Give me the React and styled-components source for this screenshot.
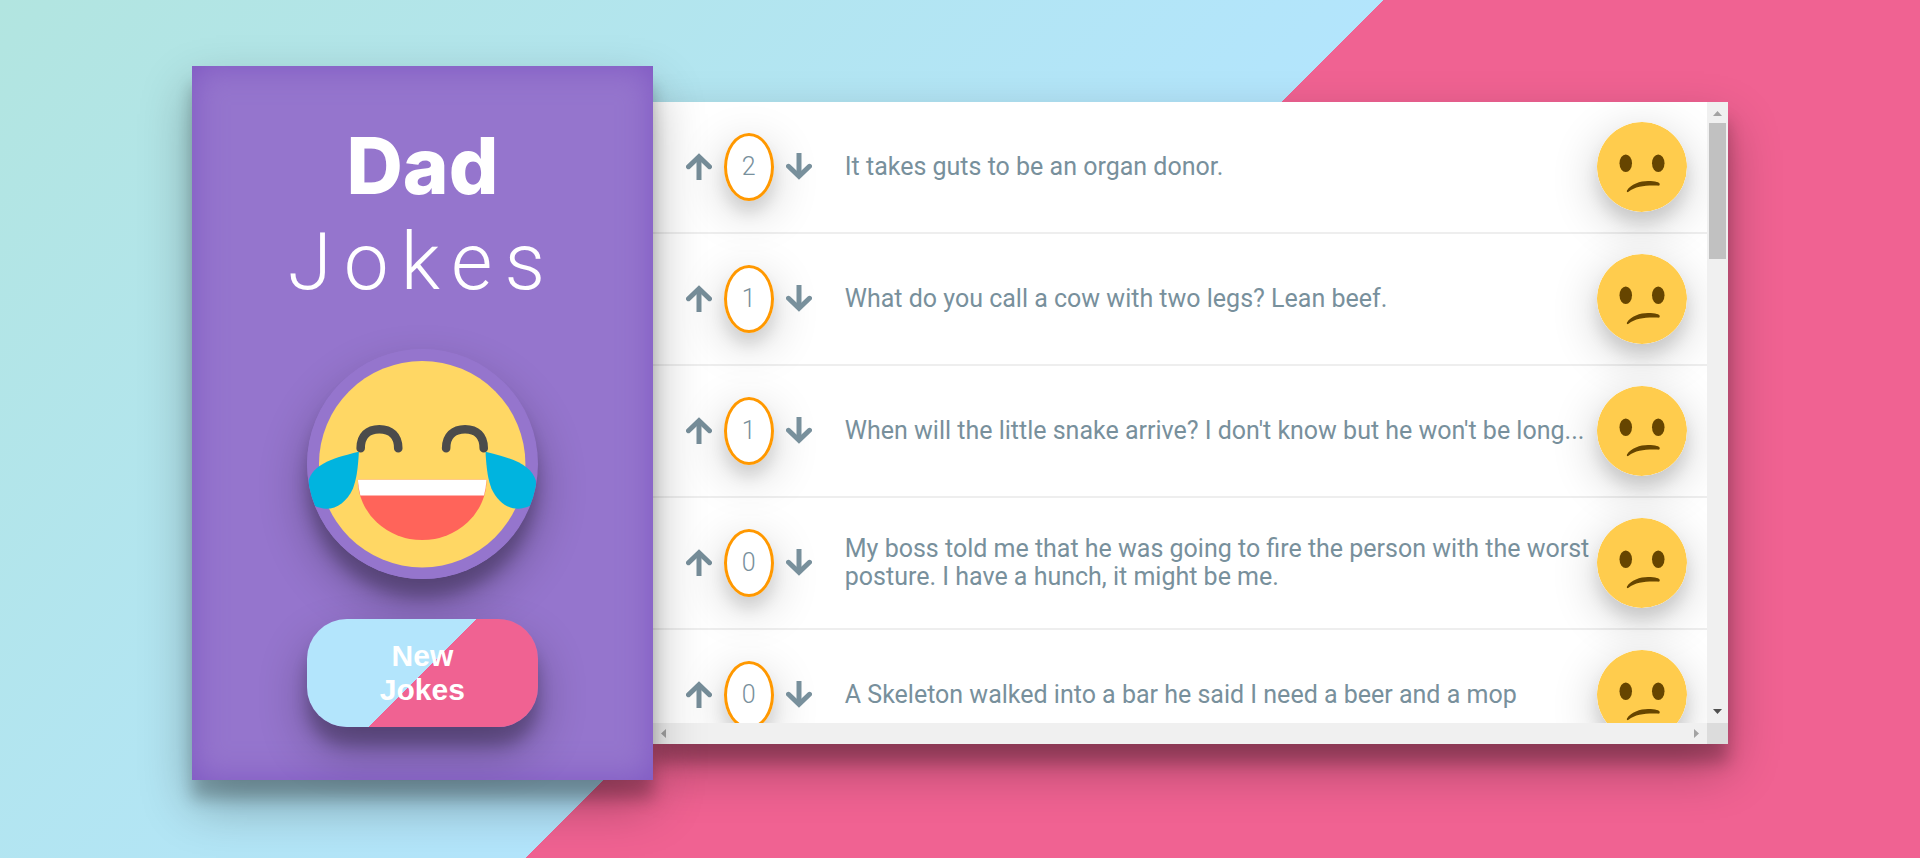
import React from "react";
import styled, { createGlobalStyle } from "styled-components";

const deepShadow = "0 24px 48px rgba(0, 0, 0, 0.3), 0 19px 15px rgba(0, 0, 0, 0.22)";
const softShadow = "0 12px 48px rgba(0, 0, 0, 0.2), 0 12px 15px rgba(0, 0, 0, 0.1)";

const GlobalStyle = createGlobalStyle`
  *, *::before, *::after { box-sizing: border-box; }
  body {
    margin: 0;
    font-family: Roboto, "Liberation Sans", sans-serif;
    background: #f06292;
  }
`;

const Page = styled.main`
  min-height: 100vh;
  padding-bottom: 12px;
  display: flex;
  align-items: center;
  justify-content: center;
  overflow: hidden;
  background: linear-gradient(-45deg, #f06292 calc(50% + 4px), #b3e5fc calc(50% + 4px), #b2e5e0 100%);
`;

const JokeList = styled.div`
  display: flex;
  align-items: center;
  width: 80%;
`;

const Sidebar = styled.aside`
  position: relative;
  z-index: 2;
  display: flex;
  flex-direction: column;
  align-items: center;
  width: 30%;
  padding: 52px 0 53px;
  background: #9575cd;
  box-shadow: ${deepShadow}, inset 0 0 32px #7e57c2;
`;

const Title = styled.h1`
  margin: 0 0 39px;
  color: #fff;
  font-size: 80px;
  line-height: 96px;
  font-weight: 300;
  letter-spacing: 12px;
  text-align: center;
`;

const Strong = styled.span`
  display: block;
  font-family: Inter, Roboto, sans-serif;
  font-size: 78px;
  font-weight: 800;
  letter-spacing: 0;
`;

const Laugh = styled.svg`
  display: block;
  width: 50%;
  border-radius: 50%;
  box-shadow: ${deepShadow};
`;

const MoreButton = styled.button`
  width: 50%;
  margin: 40px 0 0;
  padding: 20px 60px;
  border: 0;
  border-radius: 40px;
  color: #fff;
  font: 700 30px/34px "Liberation Sans", sans-serif;
  background: linear-gradient(-45deg, #f06292 0%, #f06292 50%, #b3e5fc 50%, #b3e5fc 100%);
  box-shadow: ${deepShadow};
  cursor: pointer;
`;

const Panel = styled.section`
  display: grid;
  grid-template-columns: minmax(0, 1fr) 21px;
  grid-template-rows: minmax(0, 1fr) 21px;
  width: 70%;
  height: 642px;
  background: #fff;
  box-shadow: ${deepShadow};
`;

const Jokes = styled.ul`
  margin: 0;
  padding: 0;
  list-style: none;
  overflow: hidden;
`;

const Joke = styled.li`
  display: flex;
  align-items: center;
  height: 132px;
  padding: 0 20px;
  border-bottom: 2px solid #eee;
  color: #78909c;
`;

const Votes = styled.div`
  display: flex;
  align-items: center;
  justify-content: center;
  gap: 10px;
  width: 152px;
`;

const VoteButton = styled.button`
  display: flex;
  justify-content: center;
  width: 30px;
  padding: 0;
  border: 0;
  background: none;
  color: inherit;
  cursor: pointer;
`;

const VoteIcon = styled.svg`
  width: 26px;
  height: 27px;
  fill: none;
  stroke: currentColor;
  stroke-width: 5px;
`;

const Score = styled.span`
  width: 50px;
  height: 68px;
  border: 3px solid #ff9800;
  border-radius: 50%;
  font-size: 25px;
  line-height: 62px;
  font-weight: 300;
  text-align: center;
  box-shadow: ${softShadow};
`;

const JokeText = styled.p`
  flex: 1;
  margin: 0 0 0 20px;
  font-size: 25px;
  line-height: 28px;
`;

const Face = styled.svg`
  flex: none;
  width: 90px;
  height: 90px;
  border-radius: 50%;
  box-shadow: ${softShadow};
`;

const ScrollBar = styled.div`
  display: flex;
  flex-direction: ${(p) => (p.$vertical ? "column" : "row")};
  align-items: center;
  justify-content: space-between;
  background: #f0f0f0;
`;

const ScrollArrow = styled.svg`
  flex: none;
  width: 21px;
  height: 21px;
  fill: ${(p) => (p.$active ? "#505050" : "#a3a3a3")};
`;

const Thumb = styled.div`
  width: 17px;
  height: 136px;
  margin-bottom: auto;
  background: #c1c1c1;
`;

const Corner = styled.div`
  background: #dcdcdc;
`;

const arrowPaths = {
  up: "M6 14h9l-4.500-5z",
  down: "M6 7h9l-4.500 5z",
  left: "M13 6v9l-5-4.500z",
  right: "M8 6v9l5-4.500z",
};

function Arrow({ dir, active }) {
  return (
    <ScrollArrow $active={active} viewBox="0 0 21 21" aria-hidden="true">
      <path d={arrowPaths[dir]} />
    </ScrollArrow>
  );
}

function VoteArrow({ down }) {
  return (
    <VoteIcon viewBox="0 0 26 27" aria-hidden="true">
      <g transform={down ? "rotate(180 13 13.5)" : undefined}>
        <path d="M2.500 13.700L13 3.700L23.500 13.700" strokeLinecap="round" />
        <path d="M13 4V27" />
      </g>
    </VoteIcon>
  );
}

function LaughingFace() {
  return (
    <Laugh viewBox="0 0 231 231" role="img" aria-label="Laughing face">
      <circle cx="115.500" cy="115.500" r="115.500" fill="#9575cd" />
      <circle cx="115.500" cy="115.500" r="103.500" fill="#ffd764" />
      <g fill="none" stroke="#4b4b4b" strokeWidth="8.600" strokeLinecap="round">
        <path d="M53.800 99.500C53.800 87 61 80.500 72.500 80.500S91.500 87 91.500 99.500" />
        <path d="M139.500 99.500C139.500 87 147 80.500 158.500 80.500S177.200 87 177.200 99.500" />
      </g>
      <path d="M51 131H180A64.500 60.500 0 0 1 51 131Z" fill="#ff645a" />
      <path d="M51 131H180Q179.500 139 177.500 147H53.500Q51.500 139 51 131Z" fill="#fff" />
      <path d="M52 103C51 123 49 132 46 140C38 157 23 165 7 157C3 150 1 140 1.500 132C6 117 22 110 52 103Z" fill="#00b4df" />
      <path d="M179 103C180 123 182 132 185 140C193 157 208 165 224 157C228 150 230 140 229.500 132C225 117 209 110 179 103Z" fill="#00b4df" />
    </Laugh>
  );
}

function ConfusedFace() {
  return (
    <Face viewBox="0 0 36 36" role="img" aria-label="Confused face">
      <circle cx="18" cy="18" r="18" fill="#ffcc4d" />
      <ellipse cx="11.500" cy="16.500" rx="2.500" ry="3.500" fill="#664500" />
      <ellipse cx="24.500" cy="16.500" rx="2.500" ry="3.500" fill="#664500" />
      <path
        fill="#664500"
        d="M12.100 28c-.2-.1-.2-.4-.1-.6 1.400-2.500 5.300-3.800 8.400-3.800 3 0 4.800.5 4.700 1.300-.1.700-.5.600-1.400.5-4.600-.1-8.300.3-11.100 2.500-.2.200-.4.200-.5.100z"
      />
    </Face>
  );
}

const jokes = [
  { votes: 2, text: "It takes guts to be an organ donor." },
  { votes: 1, text: "What do you call a cow with two legs? Lean beef." },
  { votes: 1, text: "When will the little snake arrive? I don't know but he won't be long..." },
  {
    votes: 0,
    text: "My boss told me that he was going to fire the person with the worst posture. I have a hunch, it might be me.",
  },
  { votes: 0, text: "A Skeleton walked into a bar he said I need a beer and a mop" },
];

export default function App() {
  return (
    <>
      <GlobalStyle />
      <Page>
        <JokeList>
          <Sidebar>
            <Title>
              <Strong>Dad</Strong> Jokes
            </Title>
            <LaughingFace />
            <MoreButton type="button">New Jokes</MoreButton>
          </Sidebar>
          <Panel>
            <Jokes>
              {jokes.map((joke) => (
                <Joke key={joke.text}>
                  <Votes>
                    <VoteButton type="button" aria-label="Vote up">
                      <VoteArrow />
                    </VoteButton>
                    <Score>{joke.votes}</Score>
                    <VoteButton type="button" aria-label="Vote down">
                      <VoteArrow down />
                    </VoteButton>
                  </Votes>
                  <JokeText>{joke.text}</JokeText>
                  <ConfusedFace />
                </Joke>
              ))}
            </Jokes>
            <ScrollBar $vertical>
              <Arrow dir="up" />
              <Thumb />
              <Arrow dir="down" active />
            </ScrollBar>
            <ScrollBar>
              <Arrow dir="left" />
              <Arrow dir="right" />
            </ScrollBar>
            <Corner />
          </Panel>
        </JokeList>
      </Page>
    </>
  );
}
